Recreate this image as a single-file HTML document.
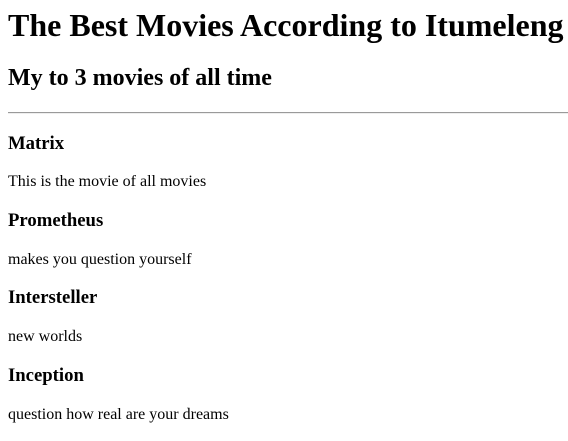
<!DOCTYPE html>
<html><head><meta charset="utf-8"><style>
html,body{background:#fff;color:#000;font-family:"Liberation Serif",serif;}
body{margin:0 8px;}
h1{font-size:32px;margin:6.5px 0 21.44px;white-space:nowrap;}
h2{font-size:24px;margin:19.92px 0;}
h3{font-size:18.72px;margin:18.72px 0;}
p{font-size:16px;margin:16px 0;}
hr{margin:8px -8px 8px 0;border:0;border-top:1px solid #9a9a9a;border-bottom:1px solid #eee;}
</style></head><body>
<h1>The Best Movies According to Itumeleng</h1>
<h2>My to 3 movies of all time</h2>
<hr>
<h3>Matrix</h3>
<p>This is the movie of all movies</p>
<h3>Prometheus</h3>
<p>makes you question yourself</p>
<h3>Intersteller</h3>
<p>new worlds</p>
<h3>Inception</h3>
<p>question how real are your dreams</p>
</body></html>
